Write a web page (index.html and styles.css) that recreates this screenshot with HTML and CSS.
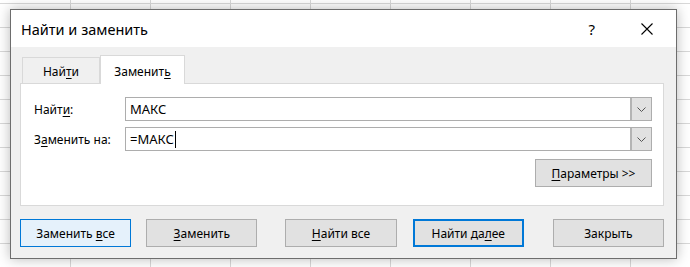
FILE: index.html
```html
<!DOCTYPE html>
<html lang="ru">
<head>
    <meta charset="UTF-8">
    <title>Найти и заменить</title>
    <link rel="stylesheet" href="styles.css">
</head>
<body>
    <div class="dialog">
        <div class="titlebar">
            <span class="title">Найти и заменить</span>
            <span class="help">?</span>
            <svg class="close" width="12" height="12" viewBox="0 0 12 12">
                <path d="M0.5 0.5 L11.5 11.5 M11.5 0.5 L0.5 11.5" stroke="#000" stroke-width="1.1" fill="none"/>
            </svg>
        </div>
        <div class="body">
            <div class="tabs">
                <div class="tab">Най<u>т</u>и</div>
                <div class="tab active">Замени<span>т</span><u>ь</u></div>
            </div>
            <div class="panel">
                <div class="row">
                    <label class="label">Найт<u>и</u>:</label>
                    <div class="combo">
                        <span class="value">МАКС</span>
                        <span class="drop"><svg width="9" height="5" viewBox="0 0 9 5"><path d="M0.5 0.5 L4.5 4.5 L8.5 0.5" stroke="#555" fill="none"/></svg></span>
                    </div>
                </div>
                <div class="row">
                    <label class="label">З<u>а</u>менить на:</label>
                    <div class="combo">
                        <span class="value">=МАКС<span class="caret"></span></span>
                        <span class="drop"><svg width="9" height="5" viewBox="0 0 9 5"><path d="M0.5 0.5 L4.5 4.5 L8.5 0.5" stroke="#555" fill="none"/></svg></span>
                    </div>
                </div>
                <div class="options">
                    <button class="btn params"><u>П</u>араметры &gt;&gt;</button>
                </div>
            </div>
            <div class="actions">
                <button class="btn hover">Заменить <u>в</u>се</button>
                <button class="btn b2"><u>З</u>аменить</button>
                <button class="btn b3"><u>Н</u>айти все</button>
                <button class="btn b4 focus">Найти да<u>л</u>ее</button>
                <button class="btn b5">Закрыть</button>
            </div>
        </div>
    </div>
</body>
</html>
```

FILE: styles.css
```css
body {
    margin: 0;
    padding: 9px 0 0 10px;
    height: 267px;
    box-sizing: border-box;
    overflow: hidden;
    font-family: "Noto Sans", "Open Sans", sans-serif;
    font-size: 12px;
    color: #000;
    background-color: #fff;
    background-image:
        linear-gradient(to right, #d8d8d8 1px, transparent 1px),
        linear-gradient(to bottom, #d8d8d8 1px, transparent 1px);
    background-size: 80px 100%, 100% 24px;
    background-position: 70px 0, 0 3px;
}
u {
    text-decoration-thickness: 1px;
    text-underline-offset: 2px;
}
.dialog {
    width: 667px;
    height: 250px;
    box-sizing: border-box;
    border: 1px solid #6d6d6d;
    background: #f0f0f0;
    box-shadow: 0 0 12px rgba(0, 0, 0, 0.28);
    display: flex;
    flex-direction: column;
}
.titlebar {
    height: 37px;
    background: #fff;
    display: flex;
    align-items: center;
    padding: 0 23px 0 10px;
}
.title {
    font-size: 14.5px;
    flex: 1;
}
.help {
    font-size: 15px;
    margin-right: 46px;
}
.body {
    padding: 0 12px 0 9px;
}
.tabs {
    display: flex;
    height: 36px;
    align-items: flex-end;
    padding-left: 2px;
}
.tab {
    height: 26px;
    box-sizing: border-box;
    width: 78px;
    border: 1px solid #d9d9d9;
    border-bottom: none;
    display: flex;
    align-items: center;
    justify-content: center;
    padding-top: 2px;
}
.tab.active {
    width: 85px;
    height: 29px;
    margin-bottom: -1px;
    background: #fff;
    position: relative;
    z-index: 1;
}
.panel {
    height: 123px;
    box-sizing: border-box;
    background: #fff;
    border: 1px solid #d9d9d9;
    padding: 13px 11px 0 13px;
}
.row {
    display: flex;
    align-items: center;
    margin-bottom: 6px;
}
.label {
    width: 91px;
}
.combo {
    flex: 1;
    height: 24px;
    box-sizing: border-box;
    border: 1px solid #adadad;
    display: flex;
    align-items: center;
    font-size: 13px;
}
.value {
    flex: 1;
    padding-left: 4px;
    display: flex;
    align-items: center;
}
.caret {
    width: 1px;
    height: 17px;
    background: #000;
    margin-left: 1px;
}
.drop {
    width: 21px;
    height: 22px;
    box-sizing: border-box;
    background: #e1e1e1;
    border-left: 2px solid #b4b4b4;
    display: flex;
    align-items: center;
    justify-content: center;
}
.options {
    display: flex;
    justify-content: flex-end;
    margin-top: 8px;
}
.btn {
    font-family: inherit;
    font-size: 12px;
    color: #000;
    width: 112px;
    height: 28px;
    background: #e1e1e1;
    border: 1px solid #adadad;
    padding: 0;
}
.params {
    width: 117px;
}
.actions {
    display: flex;
    margin-top: 13px;
}
.btn.hover {
    background: #e5f1fb;
    border-color: #0078d7;
}
.btn.focus {
    border: 2px solid #0078d7;
}
.b2 {
    margin-left: 15px;
}
.b3 {
    margin-left: 28px;
}
.b4 {
    margin-left: 16px;
}
.b5 {
    margin-left: 29px;
}
```
